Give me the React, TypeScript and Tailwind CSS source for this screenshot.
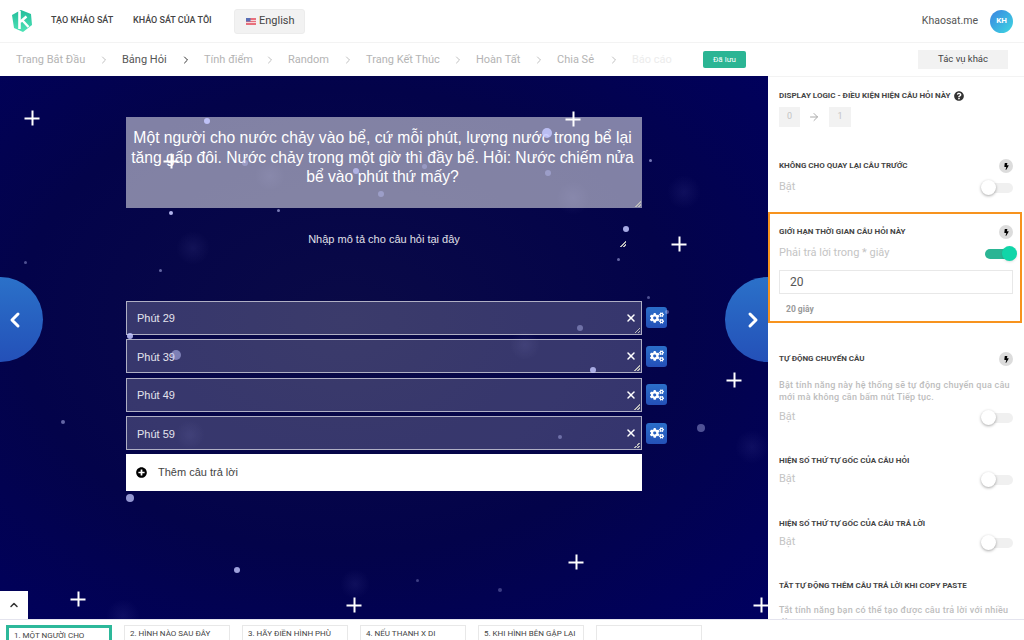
import { ChevronLeft, ChevronRight, ChevronUp, ArrowRight, X } from "lucide-react";
import { FaCogs, FaBolt, FaQuestionCircle, FaPlusCircle } from "react-icons/fa";

const steps = [
  { label: "Trang Bắt Đầu", w: "w-[69px]" },
  { label: "Bảng Hỏi", w: "w-[45px]", active: true },
  { label: "Tính điểm", w: "w-[47px]" },
  { label: "Random", w: "w-[41px]" },
  { label: "Trang Kết Thúc", w: "w-[73px]" },
  { label: "Hoàn Tất", w: "w-[44px]" },
  { label: "Chia Sẻ", w: "w-[38px]" },
];

const answers = ["Phút 29", "Phút 39", "Phút 49", "Phút 59"];

const tabs = [
  "1. MỘT NGƯỜI CHO",
  "2. HÌNH NÀO SAU ĐÂY",
  "3. HÃY ĐIỀN HÌNH PHÙ",
  "4. NẾU THANH X DI",
  "5. KHI HÌNH BÊN GẬP LẠI",
  "",
];

// [x, y, size, opacity]
const dots = [
  [207, 121, 6, 0.9], [171, 213, 4, 0.9], [278, 210, 3, 0.6], [245, 163, 6, 0.35],
  [356, 171, 6, 0.7], [381, 194, 6, 0.4], [547, 133, 10, 0.85], [424, 166, 5, 0.35],
  [548, 173, 6, 0.4], [650, 160, 3, 0.6], [626, 229, 6, 0.85], [618, 259, 3, 0.5],
  [130, 336, 6, 0.85], [176, 355, 10, 0.5], [130, 498, 8, 0.75], [580, 328, 6, 0.4],
  [593, 370, 6, 0.8], [560, 437, 4, 0.4], [701, 428, 8, 0.4], [667, 312, 4, 0.4],
  [160, 270, 3, 0.5], [63, 422, 4, 0.5], [237, 570, 6, 0.8], [2, 302, 6, 0.8],
  [25, 262, 3, 0.4], [500, 590, 4, 0.3], [648, 297, 3, 0.4], [417, 580, 3, 0.3],
];

// [x, y, size]
const glows = [
  [193, 248, 34], [684, 192, 34], [573, 198, 34], [270, 176, 30],
  [123, 616, 34], [355, 584, 30], [190, 435, 30], [525, 345, 30], [752, 447, 34],
];

const stars = [
  [32, 118], [573, 119], [679, 244], [734, 380], [576, 562], [78, 599], [354, 605], [761, 605], [171, 161],
];

function Toggle({ on }: { on?: boolean }) {
  if (on) {
    return (
      <div className="relative mr-[-1px] mt-[2px] h-[10px] w-[29px] rounded-full bg-[#2bb594]">
        <div className="absolute right-[-3px] top-[-3px] h-[15px] w-[15px] rounded-full bg-[#10d5a8] shadow" />
      </div>
    );
  }
  return (
    <div className="relative mt-[2px] h-[10px] w-[30px] rounded-full bg-[#f0f0f0]">
      <div className="absolute left-[-2px] top-[-3px] h-[15px] w-[15px] rounded-full bg-white shadow-[0_1px_3px_rgba(0,0,0,0.35)]" />
    </div>
  );
}

function Bolt() {
  return (
    <div className="flex h-[14px] w-[14px] items-center justify-center rounded-full bg-[#dcdcdc] text-black">
      <FaBolt className="h-[7px] w-[7px]" />
    </div>
  );
}

function Title({ text, bolt }: { text: string; bolt?: boolean }) {
  return (
    <div className="flex h-[14px] items-center justify-between">
      <span className="text-[8px] font-bold uppercase text-[#444]">{text}</span>
      {bolt && <Bolt />}
    </div>
  );
}

function SwitchRow({ label = "Bật", on }: { label?: string; on?: boolean }) {
  return (
    <div className="flex h-[14px] items-center justify-between">
      <span className="text-[11px] text-[#c4c4c4]">{label}</span>
      <Toggle on={on} />
    </div>
  );
}

function ResizeHandle() {
  return (
    <div className="h-[6px] w-[6px] bg-[linear-gradient(135deg,transparent_50%,#bbb_50%,#bbb_60%,transparent_60%,transparent_75%,#bbb_75%,#bbb_85%,transparent_85%)]" />
  );
}

function Answer({ text }: { text: string }) {
  return (
    <div className="flex items-center">
      <div className="relative flex h-[34px] w-[516px] items-center justify-between border border-white/60 bg-white/20 pl-[10px] pr-[4px] text-[11px] text-[#e4e4ee]">
        <span className="mt-[2px]">{text}</span>
        <X className="h-[12px] w-[12px] text-white" strokeWidth={3} />
        <div className="absolute bottom-[1px] right-[1px]">
          <ResizeHandle />
        </div>
      </div>
      <button className="ml-[4px] flex h-[21px] w-[21px] items-center justify-center rounded-[3px] bg-gradient-to-b from-[#2b6fc9] to-[#2450b8] text-white">
        <FaCogs className="h-[14px] w-[14px]" />
      </button>
    </div>
  );
}

function Flag() {
  return (
    <svg width="10" height="7" viewBox="0 0 10 7" className="mr-[3px]">
      <rect width="10" height="7" fill="#e8707c" />
      <rect y="2" width="10" height="1" fill="#f5d5d8" />
      <rect y="4" width="10" height="1" fill="#f5d5d8" />
      <rect width="4.5" height="3.5" fill="#5a6fb5" />
    </svg>
  );
}

function Logo() {
  return (
    <svg width="20" height="22" viewBox="0 0 20 22">
      <defs>
        <linearGradient id="logo" x1="0" y1="0" x2="0" y2="1">
          <stop offset="0" stopColor="#22bd9b" />
          <stop offset="1" stopColor="#4fe3b6" />
        </linearGradient>
      </defs>
      <path d="M9 0 L19 4 L20 15 L11 22 L2 18 L0 5 Z" fill="url(#logo)" />
      <path d="M7.5 1 L7.5 19" stroke="#fff" strokeWidth="2.6" fill="none" />
      <path d="M8 12 L14.5 6.5 M11 11 L16.5 17" stroke="#fff" strokeWidth="2.4" fill="none" />
    </svg>
  );
}

export default function App() {
  return (
    <div className="flex h-[640px] w-[1024px] flex-col overflow-hidden bg-white font-['Roboto',sans-serif]">
      {/* top bar */}
      <header className="flex h-[43px] shrink-0 items-center border-b border-[#f3f3f3] pl-[12px] pr-[11px]">
        <Logo />
        <nav className="ml-[19px] flex items-center gap-[17px] text-[9px] font-medium text-[#444]">
          <span className="w-[65px]">TẠO KHẢO SÁT</span>
          <span className="w-[82px]">KHẢO SÁT CỦA TÔI</span>
        </nav>
        <button className="ml-[19px] flex h-[25px] w-[71px] items-center rounded-[3px] border border-[#ececec] bg-[#f2f2f2] pl-[11px] text-[11px] text-[#444]">
          <Flag />
          English
        </button>
        <div className="ml-auto flex items-center gap-[12px]">
          <span className="text-[10.5px] text-[#555]">Khaosat.me</span>
          <div className="flex h-[23px] w-[23px] items-center justify-center rounded-full bg-gradient-to-br from-[#3b82e0] to-[#40d8e0] text-[8px] font-bold text-white">
            KH
          </div>
        </div>
      </header>

      {/* steps */}
      <div className="flex h-[33px] shrink-0 items-center pl-[16px] pr-[16px]">
        {steps.map((s) => (
          <div key={s.label} className="flex items-center">
            <span className={`${s.w} mt-[2px] whitespace-nowrap text-[11px] ${s.active ? "text-[#555]" : "text-[#b4b4b4]"}`}>
              {s.label}
            </span>
            <ChevronRight
              className={`mx-[12.5px] h-[12px] w-[12px] ${s.active ? "text-[#333]" : "text-[#aaa]"}`}
              strokeWidth={s.active ? 2 : 1.5}
            />
          </div>
        ))}
        <span className="mt-[2px] w-[39px] whitespace-nowrap text-[11px] text-[#ececec]">Báo cáo</span>
        <button className="ml-[32px] flex h-[17px] w-[43px] items-center justify-center rounded-[2px] bg-[#2bb594] text-[8px] text-white">
          Đã lưu
        </button>
        <button className="ml-auto h-[19px] w-[90px] bg-[#f2f2f2] text-[9.5px] text-[#444]">Tác vụ khác</button>
      </div>

      <div className="flex min-h-0 flex-1">
        {/* canvas */}
        <main className="relative w-[768px] shrink-0 overflow-hidden bg-[radial-gradient(ellipse_at_45%_45%,#0a0a46_0%,#03034a_55%,#000060_100%)] font-['Liberation_Sans',sans-serif]">
          {glows.map(([x, y, s], i) => (
            <div
              key={i}
              className="absolute rounded-full bg-[radial-gradient(circle,rgba(160,160,255,0.08),transparent_70%)]"
              style={{ left: x - s / 2, top: y - 76 - s / 2, width: s, height: s }}
            />
          ))}
          <div className="relative flex flex-col pl-[126px] pt-[41px]">
            <div className="relative flex h-[91px] w-[516px] justify-center bg-white/50 pr-[3px] pt-[11px] text-center text-[15.7px] leading-[19.5px] text-white">
              <p className="w-[510px]">
                Một người cho nước chảy vào bể, cứ mỗi phút, lượng nước trong bể lại tăng gấp đôi. Nước chảy trong một
                giờ thì đầy bể. Hỏi: Nước chiếm nửa bể vào phút thứ mấy?
              </p>
              <div className="absolute bottom-[1px] right-[1px]">
                <ResizeHandle />
              </div>
            </div>
            <div className="relative mt-[23px] w-[516px] text-center text-[11px] text-[#e0e0e8]">
              <p>Nhập mô tả cho câu hỏi tại đây</p>
              <div className="absolute right-[16px] top-[10px]">
                <ResizeHandle />
              </div>
            </div>
            <div className="mt-[53px] flex flex-col gap-[4.5px]">
              {answers.map((a) => (
                <Answer key={a} text={a} />
              ))}
            </div>
            <div className="mt-[4px] flex h-[37px] w-[516px] items-center bg-white pl-[10px] text-[11px] text-[#444]">
              <FaPlusCircle className="mr-[11px] h-[11px] w-[11px] text-black" />
              Thêm câu trả lời
            </div>
          </div>

          {dots.map(([x, y, s, o], i) => (
            <div
              key={i}
              className="absolute rounded-full bg-[#c4c8ff]"
              style={{ left: x - s / 2, top: y - 76 - s / 2, width: s, height: s, opacity: o }}
            />
          ))}
          {stars.map(([x, y], i) => (
            <div
              key={i}
              className="absolute h-[15px] w-[15px] -translate-x-1/2 -translate-y-1/2 bg-[linear-gradient(#fff,#fff),linear-gradient(#fff,#fff)] bg-[length:2px_100%,100%_2px] bg-center bg-no-repeat"
              style={{ left: x, top: y - 76 }}
            />
          ))}

          <button className="absolute left-[-43px] top-[201px] flex h-[85px] w-[86px] items-center justify-end rounded-full bg-gradient-to-b from-[#2b71c9] to-[#2450b8] pr-[16px] text-white">
            <ChevronLeft className="h-[24px] w-[24px]" strokeWidth={3} />
          </button>
          <button className="absolute right-[-43px] top-[201px] flex h-[85px] w-[86px] items-center rounded-full bg-gradient-to-b from-[#2b71c9] to-[#2450b8] pl-[16px] text-white">
            <ChevronRight className="h-[24px] w-[24px]" strokeWidth={3} />
          </button>
          <button className="absolute bottom-0 left-0 flex h-[28px] w-[28px] items-center justify-center bg-white text-[#333]">
            <ChevronUp className="h-[12px] w-[12px]" strokeWidth={3} />
          </button>
        </main>

        {/* settings */}
        <aside className="min-w-0 flex-1 overflow-hidden border-t border-[#f3f3f3] text-[#444]">
          <div className="px-[11px] pt-[12px]">
            <div className="flex h-[14px] items-center gap-[3px]">
              <span className="text-[8px] font-bold text-[#444]">DISPLAY LOGIC - ĐIỀU KIỆN HIỆN CÂU HỎI NÀY</span>
              <FaQuestionCircle className="h-[10px] w-[10px] text-[#333]" />
            </div>
            <div className="mt-[4px] flex items-center text-[9px] text-[#c4c4c4]">
              <div className="flex h-[20px] w-[21px] items-center justify-center bg-[#f2f2f2]">0</div>
              <ArrowRight className="mx-[8px] h-[12px] w-[12px] text-[#aaa]" />
              <div className="ml-[1px] flex h-[20px] w-[22px] items-center justify-center bg-[#f2f2f2]">1</div>
            </div>
            <div className="mt-[32px]">
              <Title text="Không cho quay lại câu trước" bolt />
            </div>
            <div className="mt-[7px]">
              <SwitchRow />
            </div>
          </div>

          <section className="mr-[2px] mt-[18px] h-[111px] border-2 border-[#f7931e] pl-[9px] pr-[7px] pt-[11px]">
            <Title text="Giới hạn thời gian câu hỏi này" bolt />
            <div className="mt-[7px]">
              <SwitchRow label="Phải trả lời trong * giây" on />
            </div>
            <div className="mt-[10px] flex h-[24px] items-center border border-[#e8e8e8] pl-[10px] text-[12px] text-[#555]">
              20
            </div>
            <p className="ml-[7px] mt-[9px] text-[8.5px] font-bold text-[#999]">20 giây</p>
          </section>

          <div className="px-[11px] pt-[29px]">
            <Title text="Tự động chuyển câu" bolt />
            <p className="mt-[14px] text-[9px] font-medium leading-[11.5px] tracking-[0.25px] text-[#bdbdbd]">
              Bật tính năng này hệ thống sẽ tự động chuyển qua câu mới mà không cần bấm nút Tiếp tục.
            </p>
            <div className="mt-[7px]">
              <SwitchRow />
            </div>
            <div className="mt-[30px]">
              <Title text="Hiện số thứ tự gốc của câu hỏi" />
            </div>
            <div className="mt-[4px]">
              <SwitchRow />
            </div>
            <div className="mt-[31px]">
              <Title text="Hiện số thứ tự gốc của câu trả lời" />
            </div>
            <div className="mt-[4px]">
              <SwitchRow />
            </div>
            <div className="mt-[30px]">
              <Title text="Tắt tự động thêm câu trả lời khi copy paste" />
            </div>
            <p className="mt-[12px] text-[9px] font-medium leading-[11.5px] tracking-[0.25px] text-[#bdbdbd]">
              Tắt tính năng bạn có thể tạo được câu trả lời với nhiều dòng.
            </p>
          </div>
        </aside>
      </div>

      {/* question tabs */}
      <footer className="flex h-[21px] shrink-0 gap-[12px] border-t border-[#e4e4ee] bg-white pl-[6px] pt-[5px]">
        {tabs.map((t, i) => (
          <div
            key={i}
            className={`h-[40px] w-[106px] shrink-0 overflow-hidden whitespace-nowrap text-[8px] text-[#444] ${
              i === 0 ? "border-[3px] border-[#2db89a] pl-[5px] pt-[2px]" : "border border-[#e8e8e8] pl-[5px] pt-[2px]"
            }`}
          >
            {t}
          </div>
        ))}
      </footer>
    </div>
  );
}
